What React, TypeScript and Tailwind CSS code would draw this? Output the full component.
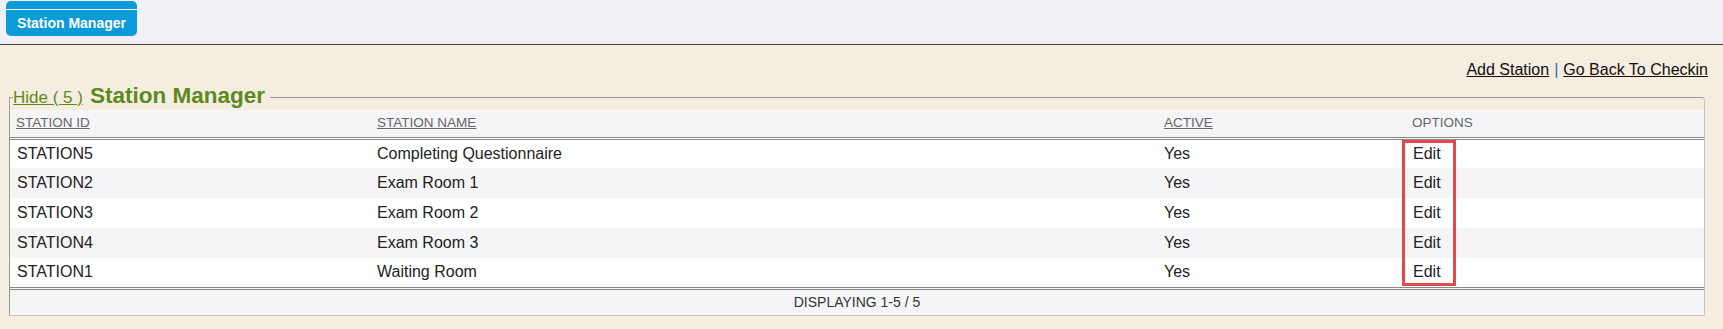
import React from 'react';

const stations = [
  { id: 'STATION5', name: 'Completing Questionnaire', active: 'Yes' },
  { id: 'STATION2', name: 'Exam Room 1', active: 'Yes' },
  { id: 'STATION3', name: 'Exam Room 2', active: 'Yes' },
  { id: 'STATION4', name: 'Exam Room 3', active: 'Yes' },
  { id: 'STATION1', name: 'Waiting Room', active: 'Yes' },
];

export default function App() {
  return (
    <div className="min-h-[329px] bg-[#f5eddf] font-['Liberation_Sans',Arial,sans-serif]">
      {/* top tab bar */}
      <div className="h-[45px] bg-[#f0f0f5] border-b border-[#444] pl-[6px] pt-[1px]">
        <div className="w-[131px] h-[35px] rounded-[5px] bg-[#0b9bd9] flex flex-col">
          <div className="h-[8px]" />
          <div className="h-[1px] bg-white" />
          <div className="flex-1 flex items-center justify-center text-white font-bold text-[14px]">
            Station Manager
          </div>
        </div>
      </div>

      <div className="pl-[9px] pr-[18px] pb-[12px]">
        <div className="flex justify-end pt-[16px] -mr-[3px] text-[16px] leading-[18px] text-[#111]">
          <a className="underline cursor-pointer">Add Station</a>
          <span className="text-[#1a6fb5] px-[5px]">|</span>
          <a className="underline cursor-pointer">Go Back To Checkin</a>
        </div>

        <fieldset className="relative border border-[#999] border-r-[#c8c8c8] border-b-[#c8c8c8] rounded-tr-[4px] mt-[5px]">
          <legend className="ml-[3px] pr-[5px] flex items-baseline leading-[24px]">
            <a className="text-[17px] text-[#5b8a1e] underline cursor-pointer mr-[7px]">Hide ( 5 )</a>
            <span className="text-[22.5px] font-bold text-[#5b8a1e]">Station Manager</span>
          </legend>

          <table className="w-full border-collapse">
            <thead>
              <tr className="bg-[#f5f5f7] border-b-[3px] border-double border-[#888]">
                <th className="w-[361px] h-[28px] pl-[6px] text-left font-normal text-[13.5px] text-[#666]">
                  <span className="underline">STATION ID</span>
                </th>
                <th className="w-[787px] pl-[6px] text-left font-normal text-[13.5px] text-[#666]">
                  <span className="underline">STATION NAME</span>
                </th>
                <th className="w-[248px] pl-[6px] text-left font-normal text-[13.5px] text-[#666]">
                  <span className="underline">ACTIVE</span>
                </th>
                <th className="pl-[6px] text-left font-normal text-[13.5px] text-[#666]">OPTIONS</th>
              </tr>
            </thead>
            <tbody>
              {stations.map((s, i) => (
                <tr key={s.id} className={i % 2 === 1 ? 'bg-[#f5f5f7]' : 'bg-white'}>
                  <td className="h-[30px] pl-[7px] text-[16px] text-[#222]">{s.id}</td>
                  <td className="pl-[6px] text-[16px] text-[#222]">{s.name}</td>
                  <td className="pl-[6px] text-[16px] text-[#222]">{s.active}</td>
                  <td className="pl-[7px] text-[16px] text-[#222] cursor-pointer">Edit</td>
                </tr>
              ))}
            </tbody>
            <tfoot>
              <tr className="bg-[#f5f5f7] border-t-[3px] border-double border-[#888]">
                <td colSpan={4} className="h-[27px] text-center text-[14px] text-[#333]">
                  DISPLAYING 1-5 / 5
                </td>
              </tr>
            </tfoot>
          </table>

          {/* highlight around the Edit links */}
          <div className="absolute left-[1392px] top-[30px] w-[54px] h-[146px] border-[3px] border-[#e24a4a] pointer-events-none" />
        </fieldset>
      </div>
    </div>
  );
}
